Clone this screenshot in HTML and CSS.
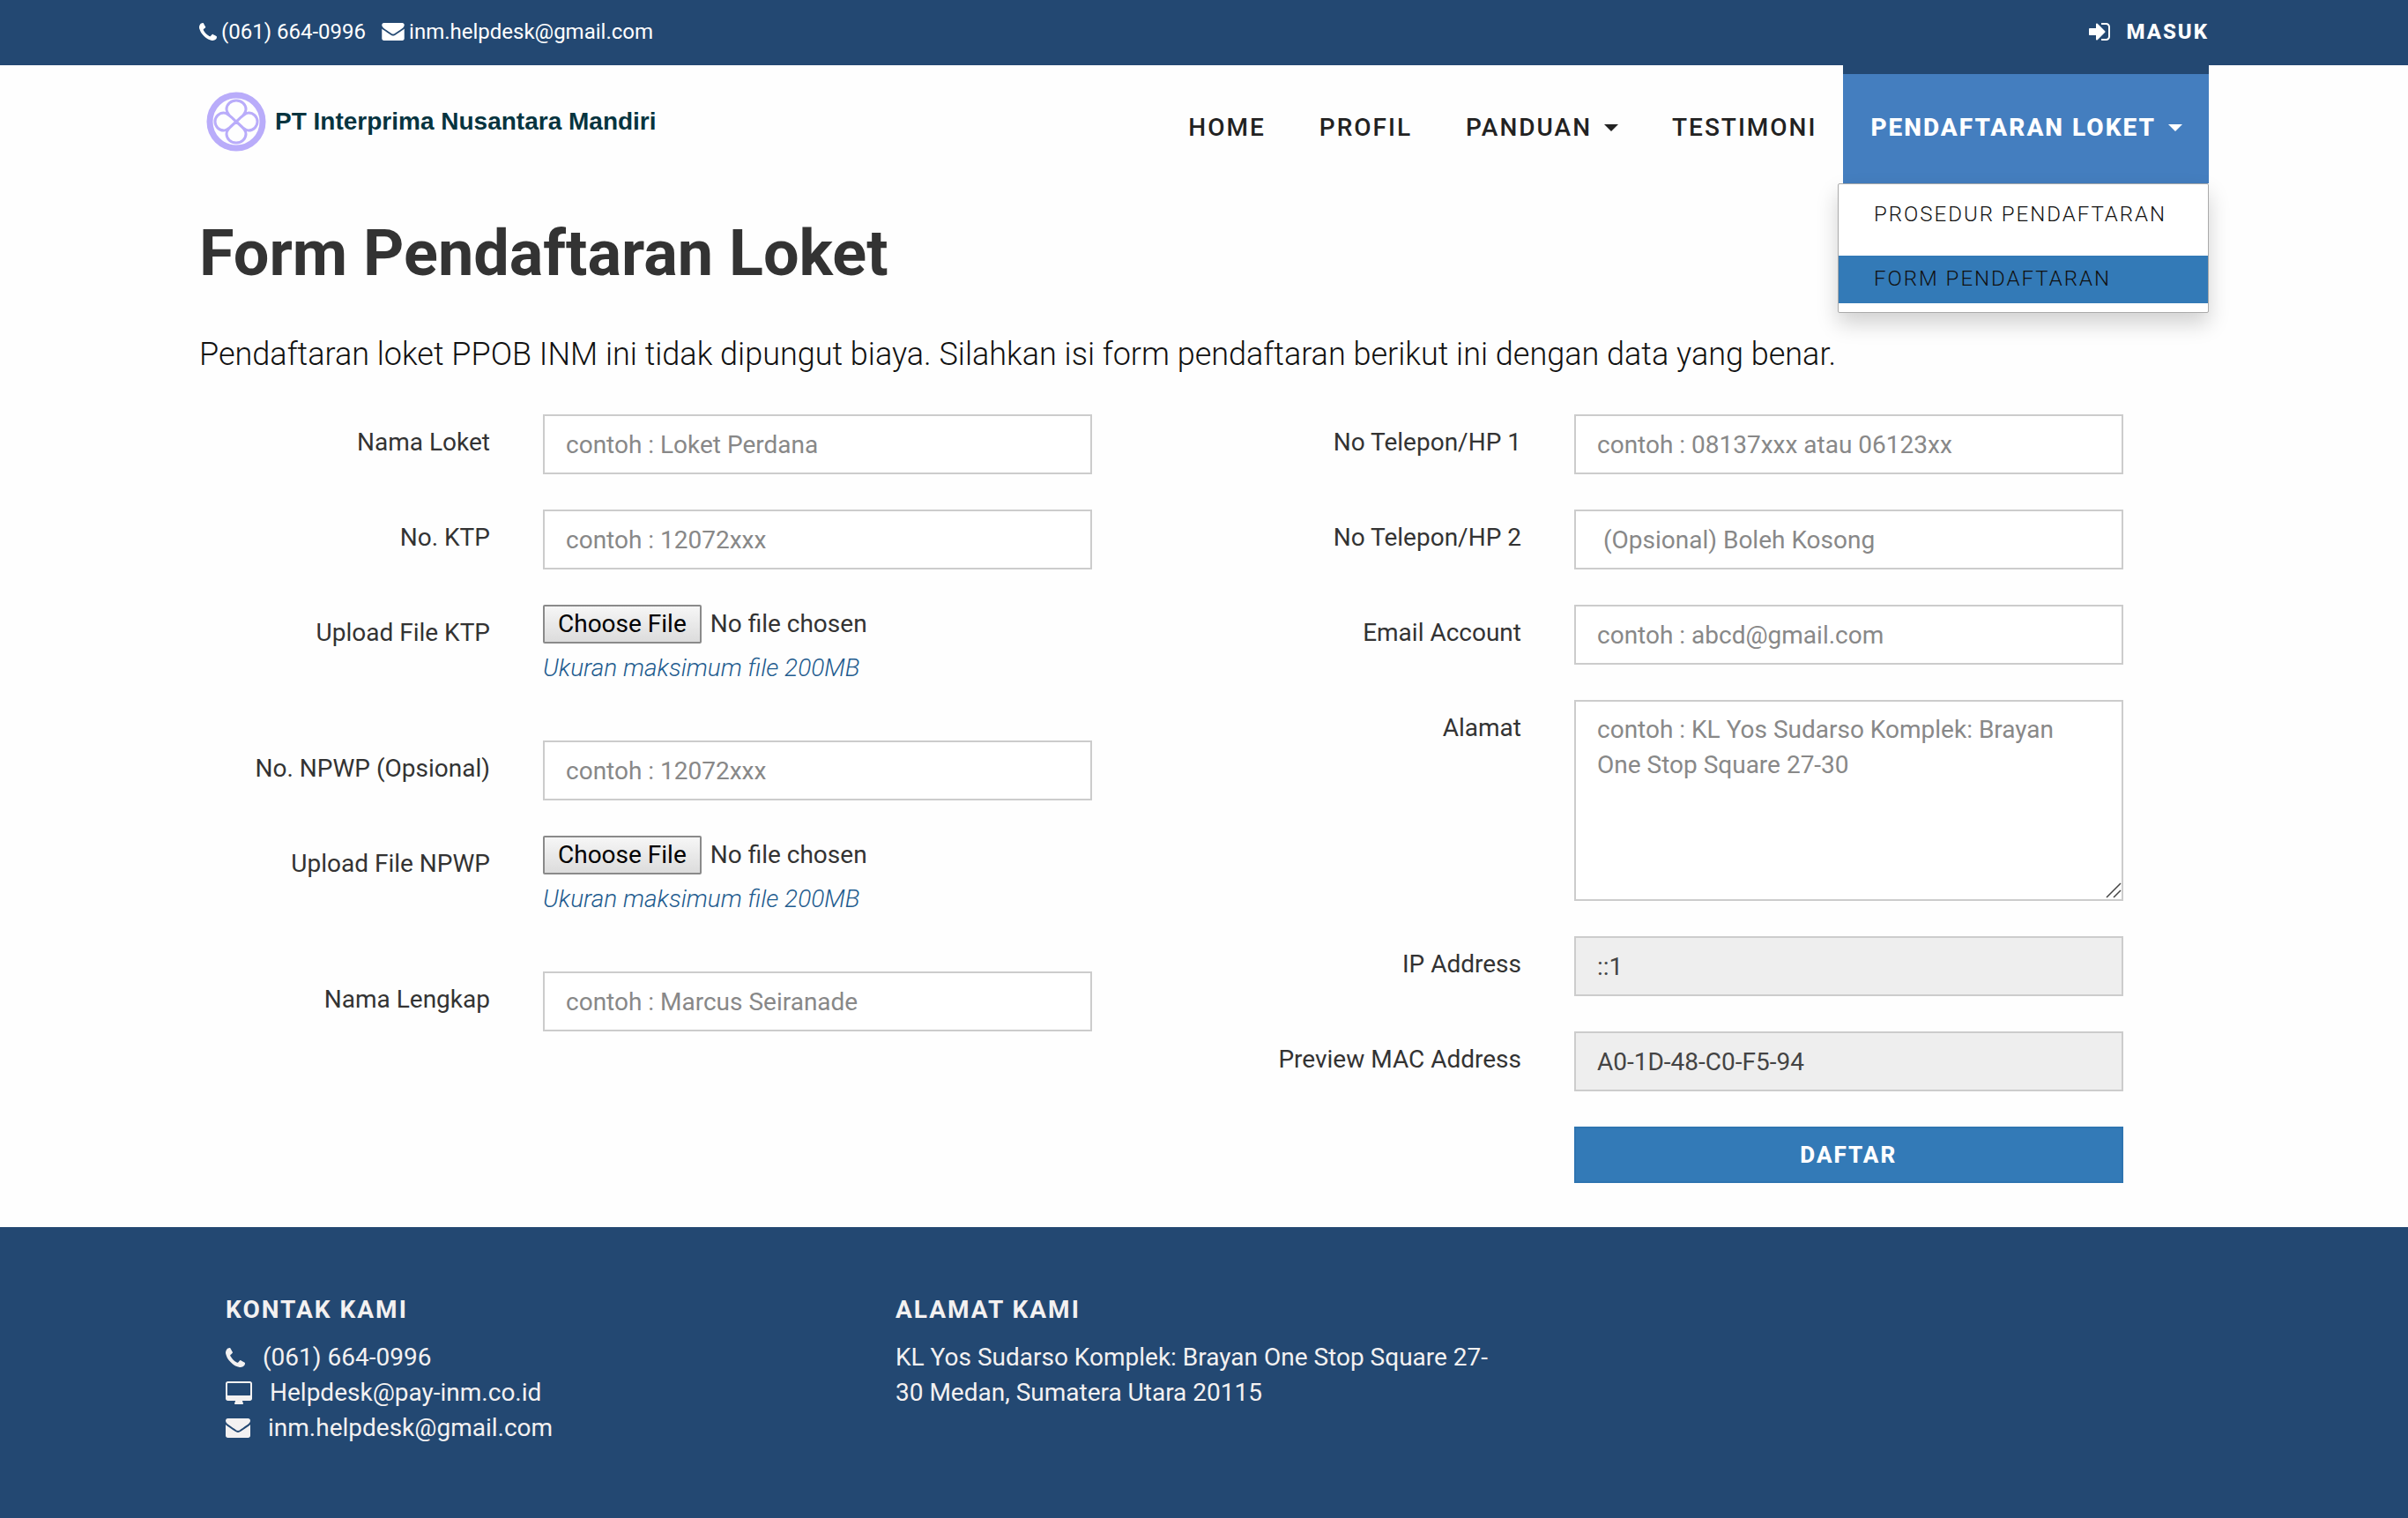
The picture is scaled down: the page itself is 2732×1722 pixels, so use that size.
FILE: index.html
```html
<!DOCTYPE html>
<html lang="id">
<head>
<meta charset="utf-8">
<title>Form Pendaftaran Loket</title>
<link rel="stylesheet" href="styles.css">
</head>
<body>
<svg class="sprite" aria-hidden="true">
  <symbol id="phone" viewBox="0 0 1408 1408"><path d="M1408 1112q0 27-10 70.500t-21 68.500q-21 50-122 106-94 51-186 51-27 0-52.500-3.500t-57.500-12.500-47.500-14.500-55.500-20.500-49-18q-98-35-175-83-128-79-264.500-215.500t-215.500-264.500q-48-77-83-175-3-9-18-49t-20.500-55.500-14.500-47.500-12.500-57.500-3.500-52.500q0-92 51-186 56-101 106-122 25-11 68.500-21t70.500-10q14 0 21 3 18 6 53 76 11 19 30 54t35 63.500 31 53.500q3 4 17.500 25t21.500 35.500 7 28.500q0 20-28.500 50t-62 55-62 53-28.500 46q0 9 5 22.500t8.500 20.500 14 24 11.500 19q76 137 174 235t235 174q2 1 19 11.500t24 14 20.500 8.500 22.500 5q18 0 46-28.500t53-62 55-62 50-28.500q14 0 28.500 7t35.500 21.500 25 17.500q25 15 53.500 31t63.500 35 54 30q70 35 76 53 3 7 3 21z"/></symbol>
  <symbol id="mail" viewBox="0 0 1792 1408"><path d="M1792 454v794q0 66-47 113t-113 47h-1472q-66 0-113-47t-47-113v-794q44 49 101 87 362 246 497 345 57 42 92.500 65.500t94.500 48 110 24.500h2q51 0 110-24.500t94.500-48 92.500-65.500q170-123 498-345 57-39 100-87zM1792 160q0 79-49 151t-122 123q-376 261-468 325-10 7-42.500 30.500t-54 38-52 32.500-57.500 27-50 9h-2q-23 0-50-9t-57.500-27-52-32.500-54-38-42.500-30.500q-91-64-262-182.500t-205-142.500q-62-42-117-115.500t-55-136.500q0-78 41.500-130t118.500-52h1472q65 0 112.500 47t47.500 113z"/></symbol>
  <symbol id="desktop" viewBox="0 0 1920 1664"><path d="M1792 992v-832q0-13-9.500-22.500t-22.500-9.500h-1600q-13 0-22.500 9.500t-9.500 22.500v832q0 13 9.500 22.500t22.500 9.500h1600q13 0 22.500-9.500t9.500-22.500zM1920 160v1088q0 66-47 113t-113 47h-544q0 37 16 77.500t32 71 16 43.500q0 26-19 45t-45 19h-512q-26 0-45-19t-19-45q0-14 16-44t32-70 16-78h-544q-66 0-113-47t-47-113v-1088q0-66 47-113t113-47h1600q66 0 113 47t47 113z"/></symbol>
  <symbol id="signin" viewBox="0 0 1536 1280"><path d="M1184 640q0 26-19 45l-544 544q-19 19-45 19t-45-19-19-45v-288h-448q-26 0-45-19t-19-45v-384q0-26 19-45t45-19h448v-288q0-26 19-45t45-19 45 19l544 544q19 19 19 45zM1536 288v704q0 119-84.500 203.500t-203.500 84.500h-320q-13 0-22.500-9.500t-9.500-22.500q0-4-1-20t-.5-26.500 3-23.500 10-19.500 20.500-6.500h320q66 0 113-47t47-113v-704q0-66-47-113t-113-47h-312l-11.500-1-11.500-3-8-5.500-7-9-2-13.500q0-4-1-20t-.5-26.500 3-23.500 10-19.500 20.500-6.500h320q119 0 203.500 84.500t84.500 203.500z"/></symbol>
</svg>

<div class="topbar">
  <div class="container topbar-inner">
    <div class="topbar-contact">
      <span class="topbar-item"><svg class="icon-phone-sm"><use href="#phone"/></svg>(061) 664-0996</span>
      <span class="topbar-item"><svg class="icon-mail-sm"><use href="#mail"/></svg>inm.helpdesk@gmail.com</span>
    </div>
    <a class="login" href="#"><svg class="icon-signin"><use href="#signin"/></svg>MASUK</a>
  </div>
</div>

<header class="container header">
  <a class="brand" href="#">
    <svg class="brand-mark" viewBox="0 0 68 68" aria-hidden="true">
      <circle cx="34" cy="34" r="30" fill="none" stroke="#b9acfa" stroke-width="7"/>
      <path d="M34 34C26 27 23 24 23 20a11 10 0 0 1 22 0C45 24 42 27 34 34C42 26 45 24 48 24a10 10 0 0 1 0 20C45 44 42 42 34 34C42 41 45 44 45 48a11 10 0 0 1-22 0C23 44 26 41 34 34C26 42 23 44 20 44a10 10 0 0 1 0-20C23 24 26 26 34 34Z" fill="none" stroke="#b9acfa" stroke-width="3"/>
    </svg>
    <span class="brand-name">PT Interprima Nusantara Mandiri</span>
  </a>
  <nav class="nav">
    <a class="nav-link" href="#">HOME</a>
    <a class="nav-link" href="#">PROFIL</a>
    <a class="nav-link" href="#">PANDUAN<span class="caret"></span></a>
    <a class="nav-link" href="#">TESTIMONI</a>
    <div class="nav-drop">
      <a class="nav-link nav-active" href="#">PENDAFTARAN LOKET<span class="caret"></span></a>
      <div class="menu">
        <a class="menu-item" href="#">PROSEDUR PENDAFTARAN</a>
        <a class="menu-item menu-current" href="#">FORM PENDAFTARAN</a>
      </div>
    </div>
  </nav>
</header>

<main class="container main">
  <h1 class="title">Form Pendaftaran Loket</h1>
  <p class="lead">Pendaftaran loket PPOB INM ini tidak dipungut biaya. Silahkan isi form pendaftaran berikut ini dengan data yang benar.</p>
  <form class="form">
    <div class="form-col">
      <div class="group"><label class="label" for="loket">Nama Loket</label><input class="control" id="loket" type="text" placeholder="contoh : Loket Perdana"></div>
      <div class="group"><label class="label" for="ktp">No. KTP</label><input class="control" id="ktp" type="text" placeholder="contoh : 12072xxx"></div>
      <div class="group"><label class="label" for="fktp">Upload File KTP</label><div class="upload"><input class="file" id="fktp" type="file"><p class="hint">Ukuran maksimum file 200MB</p></div></div>
      <div class="group"><label class="label" for="npwp">No. NPWP (Opsional)</label><input class="control" id="npwp" type="text" placeholder="contoh : 12072xxx"></div>
      <div class="group"><label class="label" for="fnpwp">Upload File NPWP</label><div class="upload"><input class="file" id="fnpwp" type="file"><p class="hint">Ukuran maksimum file 200MB</p></div></div>
      <div class="group"><label class="label" for="nama">Nama Lengkap</label><input class="control" id="nama" type="text" placeholder="contoh : Marcus Seiranade"></div>
    </div>
    <div class="form-col">
      <div class="group"><label class="label" for="hp1">No Telepon/HP 1</label><input class="control" id="hp1" type="text" placeholder="contoh : 08137xxx atau 06123xx"></div>
      <div class="group"><label class="label" for="hp2">No Telepon/HP 2</label><input class="control" id="hp2" type="text" placeholder=" (Opsional) Boleh Kosong"></div>
      <div class="group"><label class="label" for="email">Email Account</label><input class="control" id="email" type="email" placeholder="contoh : abcd@gmail.com"></div>
      <div class="group"><label class="label" for="alamat">Alamat</label><div class="area-wrap"><textarea class="control area" id="alamat" placeholder="contoh : KL Yos Sudarso Komplek: Brayan One Stop Square 27-30"></textarea><svg class="grip" viewBox="0 0 18 18" aria-hidden="true"><path d="M1 17L17 1M9 17L17 9" stroke="#444" stroke-width="1.5"/></svg></div></div>
      <div class="group"><label class="label" for="ip">IP Address</label><input class="control" id="ip" type="text" value="::1" readonly></div>
      <div class="group"><label class="label" for="mac">Preview MAC Address</label><input class="control" id="mac" type="text" value="A0-1D-48-C0-F5-94" readonly></div>
      <div class="group"><button class="submit" type="button">DAFTAR</button></div>
    </div>
  </form>
</main>

<footer class="footer">
  <div class="container footer-inner">
    <section class="footer-col">
      <h2 class="footer-title">KONTAK KAMI</h2>
      <ul class="contacts">
        <li class="contact"><svg class="icon-phone"><use href="#phone"/></svg>(061) 664-0996</li>
        <li class="contact"><svg class="icon-desktop"><use href="#desktop"/></svg>Helpdesk@pay-inm.co.id</li>
        <li class="contact"><svg class="icon-mail"><use href="#mail"/></svg>inm.helpdesk@gmail.com</li>
      </ul>
    </section>
    <section class="footer-col">
      <h2 class="footer-title">ALAMAT KAMI</h2>
      <p class="address">KL Yos Sudarso Komplek: Brayan One Stop Square 27-30 Medan, Sumatera Utara 20115</p>
    </section>
  </div>
</footer>
</body>
</html>
```
FILE: styles.css
```css
* { box-sizing: border-box; }

body {
  margin: 0;
  min-height: 100vh;
  display: flex;
  flex-direction: column;
  background: #fefefe;
  color: #333;
  font-family: Roboto, "Liberation Sans", sans-serif;
  font-size: 28px;
  line-height: 40px;
}

a { color: inherit; text-decoration: none; }
svg { fill: currentColor; flex: none; }
.sprite { display: none; }

.container {
  width: 100%;
  max-width: 2340px;
  margin: 0 auto;
  padding: 0 30px;
}

/* Top bar */
.topbar { background: #234872; color: #fff; font-size: 24px; line-height: 34px; }
.topbar-inner { display: flex; justify-content: space-between; padding-top: 19px; padding-bottom: 21px; }
.topbar-contact { display: flex; gap: 18px; }
.topbar-item { display: flex; align-items: center; gap: 5px; }
.icon-phone-sm { width: 20px; height: 20px; }
.icon-mail-sm { width: 26px; height: 20px; }
.icon-signin { width: 24px; height: 20px; }
.login { display: flex; align-items: center; gap: 18px; font-weight: 800; letter-spacing: 2px; }

/* Header */
.header { display: flex; justify-content: space-between; align-items: flex-start; }
.brand { display: flex; align-items: center; gap: 10px; padding: 30px 8px; color: #06343f; }
.brand-mark { width: 68px; height: 68px; }
.brand-name { font: 700 28px/40px "Liberation Sans", sans-serif; white-space: nowrap; }
.nav { display: flex; color: #222; font-weight: 500; letter-spacing: 2px; }
.nav-link {
  display: flex;
  align-items: center;
  padding: 41px 30px 43px 31px;
  border-top: 10px solid transparent;
  white-space: nowrap;
}
.nav-active { background: #447ebf; border-color: #234872; color: #fff; font-weight: 800; }
.caret {
  margin-left: 14px;
  border: 8px solid transparent;
  border-top-color: currentColor;
  border-bottom: 0;
}
.nav-drop { position: relative; }
.menu {
  position: absolute;
  top: 100%;
  right: 0;
  min-width: 421px;
  padding: 8px 0 10px;
  background: #fff;
  border: 1px solid #aaa;
  border-radius: 2px;
  box-shadow: 0 12px 24px rgba(0, 0, 0, .18);
  font-size: 24px;
  font-weight: 300;
  line-height: 34px;
  color: #111;
}
.menu-item { display: block; padding: 9px 40px 11px; white-space: nowrap; }
.menu-item + .menu-item { margin-top: 19px; }
.menu-current { background: #337ab7; }

/* Form */
.title { margin: 0; font-size: 72px; line-height: 80px; font-weight: 700; }
.main { padding-top: 40px; padding-bottom: 10px; }
.lead { margin: 49px 0 43px; color: #111; font-size: 36px; line-height: 50px; font-weight: 300; }
.form { display: grid; grid-template-columns: 1fr 1fr; margin: 0 -30px; }
.group { display: grid; grid-template-columns: 4fr 7fr 1fr; align-items: start; margin-bottom: 40px; }
.label { padding: 12px 30px 0; text-align: right; }
.control {
  display: block;
  width: auto;
  height: 68px;
  margin: 0 30px;
  padding: 12px 24px;
  background: #fff;
  border: 2px solid #ccc;
  border-radius: 0;
  outline: 0;
  color: #444;
  font: 400 28px/40px Roboto, "Liberation Sans", sans-serif;
}
.control::placeholder { color: #888; opacity: 1; }
.control:read-only { background: #eee; }
.area-wrap { position: relative; margin: 0 30px; }
.area { width: 100%; height: 228px; margin: 0; resize: none; }
.grip { position: absolute; right: 2px; bottom: 3px; width: 18px; height: 18px; }
.upload { height: 114px; padding: 0 30px; }
.file { display: block; width: 100%; height: 44px; font: inherit; color: #333; }
.file::file-selector-button {
  height: 44px;
  margin: 0 10px 0 0;
  padding: 0 15px;
  border: 2px solid #8a8a8a;
  border-radius: 2px;
  background: linear-gradient(#f6f6f6, #dcdcdc);
  color: #000;
  font: inherit;
}
.hint { margin: 8px 0 0; color: #1f5c8f; font-style: italic; font-weight: 300; }
.submit {
  grid-column: 2;
  height: 64px;
  margin: 0 30px;
  border: 2px solid #2e74b0;
  background: #337ab7;
  color: #fff;
  font: 800 26px/34px Roboto, "Liberation Sans", sans-serif;
  letter-spacing: 2px;
}

/* Footer */
.footer { flex: 1; background: #234872; color: #f3f1f1; padding: 74px 0 70px; }
.footer-inner { display: grid; grid-template-columns: repeat(3, 1fr); }
.footer-col { padding: 0 30px; }
.footer-title { margin: 0 0 14px; font-size: 28px; line-height: 40px; letter-spacing: 2px; }
.contacts { margin: 0; padding: 0; list-style: none; }
.contact { display: flex; align-items: center; gap: 20px; }
.address { margin: 0; }
.icon-phone { width: 22px; height: 22px; }
.icon-desktop { width: 30px; height: 26px; }
.icon-mail { width: 28px; height: 22px; }
```
